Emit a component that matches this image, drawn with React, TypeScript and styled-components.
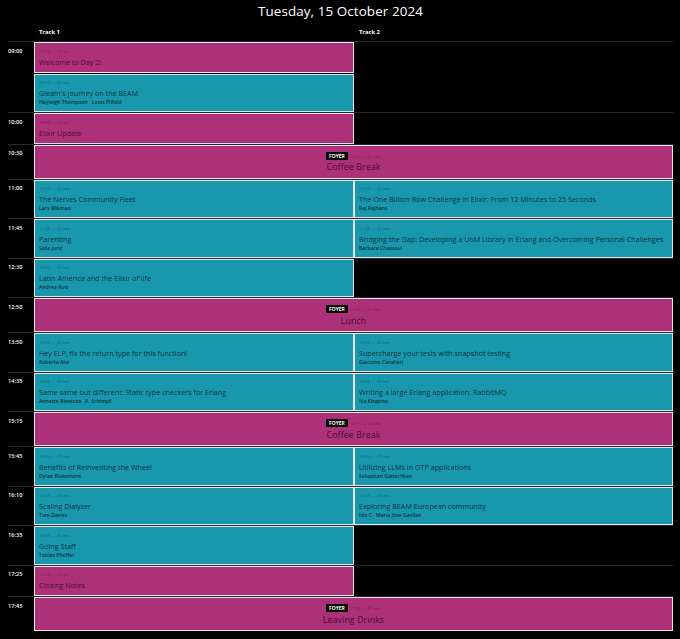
import React from "react";
import styled, { createGlobalStyle } from "styled-components";

const GlobalStyle = createGlobalStyle`
  html, body {
    margin: 0;
    padding: 0;
    background: #000;
  }
  body {
    font-family: "Open Sans", "Liberation Sans", sans-serif;
    color: #fff;
  }
`;

const MAGENTA = "#ad3179";
const TEAL = "#1998ad";

type Kind = "talk" | "misc";

interface Session {
  time: string;
  title: string;
  speakers?: string[];
  kind?: Kind;
}

interface Row {
  time: string;
  brk?: { time: string; title: string };
  tracks?: [Session[], Session[]];
}

const rows: Row[] = [
  {
    time: "09:00",
    tracks: [
      [
        { time: "09:00 → 10 min", title: "Welcome to Day 2!", kind: "misc" },
        {
          time: "09:10 → 45 min",
          title: "Gleam's journey on the BEAM",
          speakers: ["Hayleigh Thompson", "Louis Pilfold"],
        },
      ],
      [],
    ],
  },
  {
    time: "10:00",
    tracks: [[{ time: "10:00 → 30 min", title: "Elixir Update", kind: "misc" }], []],
  },
  { time: "10:30", brk: { time: "10:30 → 30 min", title: "Coffee Break" } },
  {
    time: "11:00",
    tracks: [
      [{ time: "11:00 → 40 min", title: "The Nerves Community Fleet", speakers: ["Lars Wikman"] }],
      [
        {
          time: "11:00 → 40 min",
          title: "The One Billion Row Challenge in Elixir: From 12 Minutes to 25 Seconds",
          speakers: ["Raj Rajhans"],
        },
      ],
    ],
  },
  {
    time: "11:45",
    tracks: [
      [{ time: "11:45 → 40 min", title: "Parenting", speakers: ["Saša Jurić"] }],
      [
        {
          time: "11:45 → 40 min",
          title:
            "Bridging the Gap: Developing a UoM Library in Erlang and Overcoming Personal Challenges",
          speakers: ["Barbara Chassoul"],
        },
      ],
    ],
  },
  {
    time: "12:30",
    tracks: [
      [
        {
          time: "12:30 → 20 min",
          title: "Latin America and the Elixir of life",
          speakers: ["Andrea Ruiz"],
        },
      ],
      [],
    ],
  },
  { time: "12:50", brk: { time: "12:50 → 60 min", title: "Lunch" } },
  {
    time: "13:50",
    tracks: [
      [
        {
          time: "13:50 → 40 min",
          title: "Hey ELP, fix the return type for this function!",
          speakers: ["Roberto Aloi"],
        },
      ],
      [
        {
          time: "13:50 → 40 min",
          title: "Supercharge your tests with snapshot testing",
          speakers: ["Giacomo Cavalieri"],
        },
      ],
    ],
  },
  {
    time: "14:35",
    tracks: [
      [
        {
          time: "14:35 → 40 min",
          title: "Same same but different: Static type checkers for Erlang",
          speakers: ["Annette Bieniusa", "A. Schimpf"],
        },
      ],
      [
        {
          time: "14:35 → 40 min",
          title: "Writing a large Erlang application: RabbitMQ",
          speakers: ["Ilia Khaprov"],
        },
      ],
    ],
  },
  { time: "15:15", brk: { time: "15:15 → 30 min", title: "Coffee Break" } },
  {
    time: "15:45",
    tracks: [
      [
        {
          time: "15:45 → 20 min",
          title: "Benefits of Reinventing the Wheel",
          speakers: ["Dylan Blakemore"],
        },
      ],
      [
        {
          time: "15:45 → 20 min",
          title: "Utilizing LLMs in OTP applications",
          speakers: ["Sebastian Göttschkes"],
        },
      ],
    ],
  },
  {
    time: "16:10",
    tracks: [
      [{ time: "16:10 → 20 min", title: "Scaling Dialyzer", speakers: ["Tom Davies"] }],
      [
        {
          time: "16:10 → 20 min",
          title: "Exploring BEAM European community",
          speakers: ["Isla C", "Maria Jose Gavilan"],
        },
      ],
    ],
  },
  {
    time: "16:35",
    tracks: [
      [{ time: "16:35 → 45 min", title: "Going Staff", speakers: ["Tobias Pfeiffer"] }],
      [],
    ],
  },
  {
    time: "17:25",
    tracks: [[{ time: "17:25 → 15 min", title: "Closing Notes", kind: "misc" }], []],
  },
  { time: "17:45", brk: { time: "17:45 → 45 min", title: "Leaving Drinks" } },
];

const Page = styled.div`
  padding: 0 7px 0 8px;
`;

const DayTitle = styled.h1`
  margin: 0;
  padding-top: 2px;
  height: 19px;
  font-size: 13.4px;
  line-height: 18px;
  font-weight: 400;
  text-align: center;
  letter-spacing: 0.1px;
`;

const Grid = styled.div`
  display: grid;
  grid-template-columns: 26px 320px 319px;
`;

const HeaderRow = styled.div`
  display: contents;
`;

const TrackHead = styled.div`
  height: 20px;
  padding: 2px 0 0 5px;
  box-sizing: border-box;
  display: flex;
  align-items: center;
  font-size: 5.8px;
  font-weight: 700;
`;

const SlotRow = styled.div`
  grid-column: 1 / -1;
  display: grid;
  grid-template-columns: subgrid;
  border-top: 1px solid #2a2a2a;
`;

const TimeLabel = styled.div`
  padding-top: 5.5px;
  font-size: 5.6px;
  line-height: 6px;
  font-weight: 600;
`;

const Cell = styled.div`
  display: flex;
  flex-direction: column;
  gap: 1px;
`;

const Card = styled.div<{ $kind: Kind }>`
  flex: 1;
  background: ${(p) => (p.$kind === "talk" ? TEAL : MAGENTA)};
  border: 1px solid #e6e6e6;
  padding: 5.5px 4px 5px;
  color: ${(p) => (p.$kind === "talk" ? "rgba(4, 26, 36, 0.88)" : "rgba(40, 0, 25, 0.78)")};
`;

const SlotTime = styled.div`
  font-size: 4.3px;
  line-height: 5px;
  opacity: 0.55;
`;

const SessionTitle = styled.div`
  margin-top: 4px;
  font-size: 7.2px;
  line-height: 9px;
  font-weight: 500;
  white-space: nowrap;
`;

const Speakers = styled.div`
  margin-top: 1px;
  display: flex;
  gap: 4px;
  font-size: 5.1px;
  line-height: 7px;
  font-weight: 600;
`;

const BreakCard = styled.div`
  grid-column: 2 / -1;
  height: 34px;
  box-sizing: border-box;
  background: ${MAGENTA};
  border: 1px solid #e6e6e6;
  padding-top: 6px;
  display: flex;
  flex-direction: column;
  align-items: center;
  color: rgba(40, 0, 25, 0.8);
`;

const BreakMeta = styled.div`
  display: flex;
  align-items: center;
  gap: 2px;
  height: 8px;
`;

const Badge = styled.span`
  background: #000;
  color: #fff;
  font-size: 5px;
  font-weight: 700;
  line-height: 8px;
  padding: 0 3px;
  border-radius: 1px;
`;

const BreakTime = styled.span`
  font-size: 4.3px;
  opacity: 0.55;
`;

const BreakTitle = styled.div`
  margin-top: 2.5px;
  font-size: 8.8px;
  line-height: 11px;
  font-weight: 500;
  letter-spacing: 0.1px;
`;

const SessionCard = ({ s }: { s: Session }) => (
  <Card $kind={s.kind ?? "talk"}>
    <SlotTime>{s.time}</SlotTime>
    <SessionTitle>{s.title}</SessionTitle>
    {s.speakers && (
      <Speakers>
        {s.speakers.map((n) => (
          <span key={n}>{n}</span>
        ))}
      </Speakers>
    )}
  </Card>
);

export default function App() {
  return (
    <Page>
      <GlobalStyle />
      <DayTitle>Tuesday, 15 October 2024</DayTitle>
      <Grid>
        <HeaderRow>
          <div />
          <TrackHead>Track 1</TrackHead>
          <TrackHead>Track 2</TrackHead>
        </HeaderRow>
        {rows.map((r) => (
          <SlotRow key={r.time}>
            <TimeLabel>{r.time}</TimeLabel>
            {r.brk ? (
              <BreakCard>
                <BreakMeta>
                  <Badge>FOYER</Badge>
                  <BreakTime>{r.brk.time}</BreakTime>
                </BreakMeta>
                <BreakTitle>{r.brk.title}</BreakTitle>
              </BreakCard>
            ) : (
              r.tracks!.map((t, i) => (
                <Cell key={i}>
                  {t.map((s) => (
                    <SessionCard key={s.title} s={s} />
                  ))}
                </Cell>
              ))
            )}
          </SlotRow>
        ))}
      </Grid>
    </Page>
  );
}
